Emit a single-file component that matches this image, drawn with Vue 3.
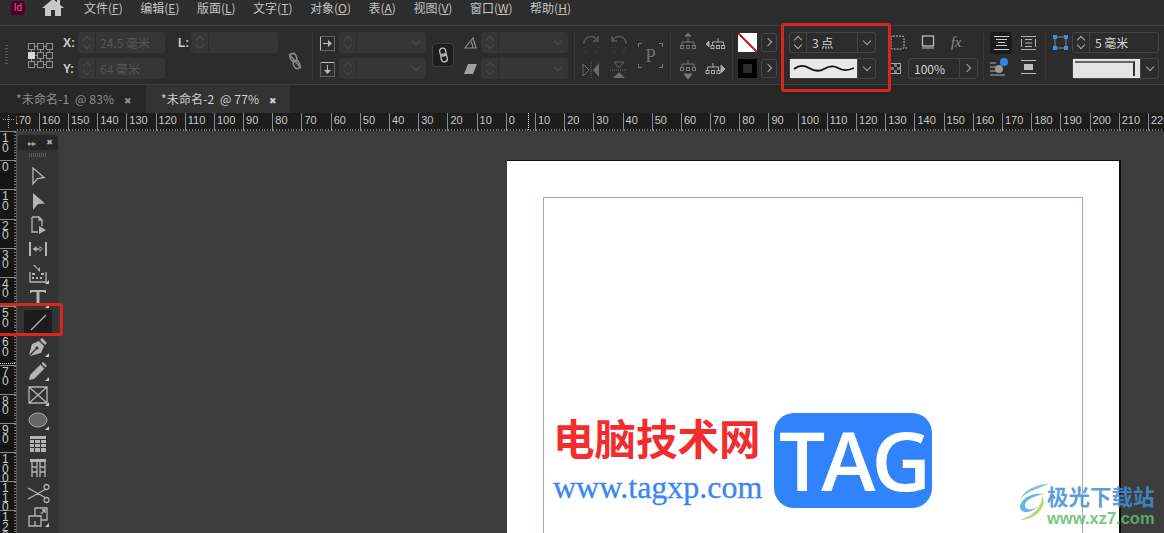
<template>
  <div class="app">
    <header class="menubar">
      <div class="id-logo">Id</div>
      <div class="home">
        <svg width="22" height="17" viewBox="0 0 22 17"><path d="M11 0 L15 3.300V1H18V5.800L22 9 H19 V17 H13 V11 H9 V17 H3 V9 H0 Z" fill="#c8c8c8" /></svg>
      </div>
      <nav class="menus">
        <span v-for="m in menus" :key="m.label">{{ m.label }}(<u>{{ m.key }}</u>)</span>
      </nav>
    </header>

    <section class="toolbar">
      <div class="grip"></div>
      <svg class="refpoint" width="26" height="26" viewBox="0 0 26 26">
        <g fill="none" stroke="#8f8f8f">
          <template v-for="r in 3" :key="r">
            <rect v-for="c in 3" :key="c" :x="0.5 + (c - 1) * 9" :y="0.5 + (r - 1) * 9" width="6" height="6" />
          </template>
        </g>
        <rect x="0" y="9" width="7" height="7" fill="#d8d8d8" />
        <path d="M7 3.5h2M16 3.5h2M7 12.5h2M16 12.5h2M7 21.5h2M16 21.5h2M3.500 7v2M3.500 16v2M12.500 7v2M12.500 16v2M21.500 7v2M21.500 16v2" stroke="#8f8f8f" />
      </svg>

      <div class="col xy">
        <div class="row"><label>X:</label><div class="field off"><span class="spin"><i class="up"></i><i class="down"></i></span><span class="val">24.5 毫米</span></div></div>
        <div class="row"><label>Y:</label><div class="field off"><span class="spin"><i class="up"></i><i class="down"></i></span><span class="val">64 毫米</span></div></div>
      </div>
      <div class="col len">
        <div class="row"><label>L:</label><div class="field off"><span class="spin"><i class="up"></i><i class="down"></i></span></div></div>
      </div>
      <svg class="unlink" width="14" height="18" viewBox="0 0 14 18" fill="none" stroke="#8c8c8c" stroke-width="1.5">
        <g transform="rotate(-25 7 9)"><rect x="4" y="1" width="6" height="8" rx="3" /><rect x="4" y="9" width="6" height="8" rx="3" /></g><path d="M1 2 L13 16" />
      </svg>
      <div class="sep"></div>

      <div class="col icon-col scale-icons">
        <svg width="15" height="15" viewBox="0 0 15 15" fill="none"><rect x=".5" y=".5" width="14" height="14" stroke="#999" stroke-dasharray="1 1" /><path d="M.5 1V14M3 7.500H9" stroke="#bbb" /><path d="M8 4L12 7.500L8 11Z" fill="#bbb" /></svg>
        <svg width="15" height="15" viewBox="0 0 15 15" fill="none"><rect x=".5" y=".5" width="14" height="14" stroke="#999" stroke-dasharray="1 1" /><path d="M1 .5H14M7.500 3V9" stroke="#bbb" /><path d="M4 8L7.500 12L11 8Z" fill="#bbb" /></svg>
      </div>
      <div class="col">
        <div class="field off"><span class="spin"><i class="up"></i><i class="down"></i></span><span class="caret"></span></div>
        <div class="field off"><span class="spin"><i class="up"></i><i class="down"></i></span><span class="caret"></span></div>
      </div>
      <button class="chain">
        <svg width="11" height="16" viewBox="0 0 11 16" fill="none" stroke="#c4c4c4" stroke-width="1.300"><g transform="rotate(-12 5.500 8)"><rect x="2.500" y="1" width="6" height="8" rx="3" /><rect x="2.500" y="7" width="6" height="8" rx="3" /></g></svg>
      </button>
      <div class="col icon-col shear">
        <svg width="13" height="12" viewBox="0 0 13 12" fill="none" stroke="#8a8a8a" stroke-width="1.200"><path d="M1 11H12L9 1Z" /><path d="M7 5Q9 7 8.500 11" /></svg>
        <svg width="13" height="12" viewBox="0 0 13 12"><path d="M4 1H13L9 11H0Z" fill="#a0a0a0" /></svg>
      </div>
      <div class="col">
        <div class="field off"><span class="spin"><i class="up"></i><i class="down"></i></span><span class="caret"></span></div>
        <div class="field off"><span class="spin"><i class="up"></i><i class="down"></i></span><span class="caret"></span></div>
      </div>
      <div class="sep s2"></div>

      <div class="transform">
        <svg width="18" height="18" viewBox="0 0 18 18" fill="none" stroke="#5a5a5a" stroke-width="1.500"><path d="M2 9A7 7 0 0 1 15 5" /><path d="M11 6H16V1" /><path d="M2 12A7 7 0 0 0 16 12" stroke-width="1" stroke-dasharray="1 2" /></svg>
        <svg width="18" height="18" viewBox="0 0 18 18" fill="none" stroke="#5a5a5a" stroke-width="1.500"><path d="M16 9A7 7 0 0 0 3 5" /><path d="M7 6H2V1" /><path d="M2 12A7 7 0 0 0 16 12" stroke-width="1" stroke-dasharray="1 2" /></svg>
        <svg width="18" height="18" viewBox="0 0 18 18"><path d="M1 3L7 9L1 15Z" fill="none" stroke="#666" /><path d="M17 2L11 9L17 16Z" fill="#6b6b6b" /><path d="M9 0V18" stroke="#666" stroke-dasharray="1 1" /></svg>
        <svg width="18" height="18" viewBox="0 0 18 18"><path d="M4 1L14 1L9 7Z" fill="none" stroke="#666" /><path d="M3 17L15 17L9 11Z" fill="#6b6b6b" /><path d="M0 9H18" stroke="#666" stroke-dasharray="1 1" /></svg>
      </div>
      <div class="pbox"><span>P</span></div>
      <div class="sep s3"></div>

      <div class="aligns">
        <svg width="18" height="22" viewBox="0 0 18 22" fill="none" stroke="#777"><path d="M9 0L12 3H6Z" fill="#777" /><path d="M9 5V9M3 12V9H15V12" /><rect x="1.500" y="12.500" width="3" height="3" /><rect x="7.500" y="12.500" width="3" height="3" /><rect x="13.500" y="12.500" width="3" height="3" /></svg>
        <svg width="20" height="16" viewBox="0 0 20 16" fill="none" stroke="#aaa"><path d="M1 8L4 5V11Z" fill="#aaa" /><path d="M13 2V6M7.500 9V6H18.500V9" /><rect x="6" y="9.500" width="3" height="3" /><rect x="11.500" y="9.500" width="3" height="3" /><rect x="16.500" y="9.500" width="3" height="3" /></svg>
        <svg width="18" height="22" viewBox="0 0 18 22" fill="none" stroke="#777"><path d="M9 2V6M3 9V6H15V9" /><rect x="1.500" y="9.500" width="3" height="3" /><rect x="7.500" y="9.500" width="3" height="3" /><rect x="13.500" y="9.500" width="3" height="3" /><path d="M9 21L5 16H13Z" fill="#777" /></svg>
        <svg width="20" height="16" viewBox="0 0 20 16" fill="none" stroke="#aaa"><path d="M8 2V6M2.500 9V6H13.500V9" /><rect x="1" y="9.500" width="3" height="3" /><rect x="6.500" y="9.500" width="3" height="3" /><rect x="12" y="9.500" width="3" height="3" /><path d="M20 8L16 4V12Z" fill="#aaa" /></svg>
      </div>
      <div class="sep s4"></div>

      <div class="swatches">
        <div class="swatch none"></div>
        <button class="more"><i></i></button>
        <div class="swatch stroke"></div>
        <button class="more"><i></i></button>
      </div>

      <div class="col stroke-col">
        <div class="field"><span class="spin on"><i class="up"></i><i class="down"></i></span><span class="val on">3 点</span><span class="caret on boxed"></span></div>
        <div class="field">
          <span class="line-preview">
            <svg width="62" height="9" viewBox="0 0 62 9" fill="none" stroke="#111" stroke-width="1.800"><path d="M1 5C6 1 11 1 16 4S26 8 31 5S40 1 45 4S54 7 61 4" /></svg>
          </span>
          <span class="caret on boxed"></span>
        </div>
      </div>

      <div class="effects">
        <div class="fx-row">
          <svg width="17" height="15" viewBox="0 0 17 15" fill="none"><path d="M3 1H12Q14 1 14 3V12Q14 14 12 14H3Q1 14 1 12V3Q1 1 3 1Z" stroke="#bbb" stroke-dasharray="2 1" /><path d="M15 13h2" stroke="#999" /></svg>
          <svg width="14" height="16" viewBox="0 0 14 16" fill="none"><rect x="1.500" y="1" width="11" height="10" stroke="#bbb" stroke-width="1.300" /><path d="M1 13H13" stroke="#777" stroke-width="2" /></svg>
          <span class="fx">fx<em>.</em></span>
        </div>
        <div class="fx-row lower">
          <svg class="checker" width="11" height="11" viewBox="0 0 11 11"><rect x=".5" y=".5" width="10" height="10" fill="#777" stroke="#aaa" /><path d="M1 1h3v3H1zM7 1h3v3H7zM4 4h3v3H4zM1 7h3v3H1zM7 7h3v3H7z" fill="#222" /></svg>
          <div class="field opacity"><span class="val on">100%</span><span class="caret on boxed arrow"></span></div>
        </div>
      </div>
      <div class="sep s5"></div>

      <div class="wraps">
        <div class="wrap active">
          <svg width="15" height="14" viewBox="0 0 15 14" fill="none" stroke="#d0d0d0"><path d="M0 .5H15M2 3.500H13M4 6.500H11M2 9.500H13M0 13.500H15" /></svg>
        </div>
        <div class="wrap">
          <svg width="15" height="14" viewBox="0 0 15 14" fill="none" stroke="#b0b0b0"><path d="M0 .5H15M0 13.500H15M.5 3V11M14.500 3V11M4 3.500H11M4 7H11M4 10.500H11" /></svg>
        </div>
        <div class="wrap">
          <svg width="22" height="20" viewBox="0 0 22 20" fill="none"><path d="M0 6H6M0 10H6M0 14H6M0 18H15" stroke="#b0b0b0" /><circle cx="9" cy="12" r="4" fill="#999" /><circle cx="14" cy="5" r="4" fill="#2f86e8" /></svg>
        </div>
        <div class="wrap">
          <svg width="15" height="14" viewBox="0 0 15 14" fill="none"><path d="M0 .5H15M0 13.500H15" stroke="#c0c0c0" /><rect x="3" y="4" width="9" height="6" fill="#c0c0c0" /></svg>
        </div>
      </div>
      <div class="sep s6"></div>

      <div class="col corner-col">
        <div class="row">
          <svg class="corner" width="15" height="15" viewBox="0 0 15 15"><path d="M2 2H13V13H2Z" fill="none" stroke="#888" /><path d="M0 0h4v4H0zM11 0h4v4h-4zM0 11h4v4H0zM11 11h4v4h-4z" fill="#3d8ee0" /></svg>
          <div class="field"><span class="spin on"><i class="up"></i><i class="down"></i></span><span class="val on">5 毫米</span></div>
        </div>
        <div class="row">
          <div class="field"><span class="frame-preview"><b></b></span><span class="caret on boxed"></span></div>
        </div>
      </div>
    </section>

    <div class="tabs">
      <div class="tab">*未命名-1&nbsp; @ 83% <b>✖</b></div>
      <div class="tab active">*未命名-2&nbsp; @ 77% <b>✖</b></div>
    </div>

    <div class="h-ruler">
      <div class="corner-box"></div>
      <div class="h-track">
        <div v-for="(n, i) in hLabels" :key="i" class="h-cell"><span>{{ n }}</span></div>
      </div>
      <i class="cursor-x"></i>
    </div>

    <main class="work">
      <aside class="v-ruler">
        <div v-for="(n, i) in vLabels" :key="i" class="v-cell">
          <span v-for="(d, j) in String(n)" :key="j">{{ d }}</span>
        </div>
        <i class="cursor-y"></i>
      </aside>

      <div class="canvas">
        <div class="page">
          <div class="margins">
            <div class="brand">
              <div class="brand-text">
                <div class="brand-cn">电脑技术网</div>
                <div class="brand-url">www.tagxp.com</div>
              </div>
              <div class="brand-tag">TAG</div>
            </div>
          </div>
        </div>

        <div class="toolbox">
          <div class="tb-head"><span>▸▸</span><b>✖</b></div>
          <div class="tb-grip"></div>
          <div v-for="t in tools" :key="t.name" class="tool" :class="{ sel: t.name === 'line', corner: t.corner }">
            <svg width="24" height="24" viewBox="0 0 24 24">
              <path v-if="t.fill" :d="t.fill" fill="#b4b4b4" />
              <path v-if="t.gray" :d="t.gray" fill="#666" stroke="#aaa" />
              <path v-if="t.line" :d="t.line" fill="none" stroke="#b4b4b4" stroke-width="1.300" />
            </svg>
          </div>
        </div>
      </div>
    </main>

    <div class="mark stroke-mark"></div>
    <div class="mark tool-mark"></div>

    <div class="xz7">
      <svg width="32" height="42" viewBox="0 0 32 42" fill="none">
        <path d="M31 2C18 2 6 8 2 18C6 11 18 7 31 2Z" fill="#67b7e8" />
        <path d="M26 12C14 10 2 17 2 25C2 32 14 32 20 24C16 28 8 29 7 24C6 19 15 14 26 12Z" fill="#4fa8dc" />
        <path d="M24 14C30 24 18 38 2 38C14 34 24 26 24 14Z" fill="#a9d65c" />
      </svg>
      <div class="xz7-text">
        <div class="xz7-cn">极光下载站</div>
        <div class="xz7-url">www.xz7.com</div>
      </div>
    </div>
  </div>
</template>

<script setup>
const menus = [
  { label: '文件', key: 'F' },
  { label: '编辑', key: 'E' },
  { label: '版面', key: 'L' },
  { label: '文字', key: 'T' },
  { label: '对象', key: 'O' },
  { label: '表', key: 'A' },
  { label: '视图', key: 'V' },
  { label: '窗口', key: 'W' },
  { label: '帮助', key: 'H' }
]

const hLabels = []
for (let n = 170; n >= 10; n -= 10) hLabels.push(n)
for (let n = 0; n <= 220; n += 10) hLabels.push(n)

const vLabels = [10, 0, 10, 20, 30, 40, 50, 60, 70, 80, 90, 100, 110, 120]

const tools = [
  { name: 'select', line: 'M7 4L18 13.500L11.500 14.500L7 20Z' },
  { name: 'direct', fill: 'M7 4L19 14.500L12 15L7 21Z' },
  { name: 'page', line: 'M6 4H13L16 7V13M6 4V19H12M13 4V7H16', fill: 'M13 13L20 17L13 21Z' },
  { name: 'gap', fill: 'M3 5H5V19H3ZM19 5H21V19H19ZM7 11.300H17V12.700H7ZM7 12L10.500 9V15ZM17 12L13.500 9V15Z' },
  { name: 'collect', corner: true, line: 'M4 10V20H20V10', fill: 'M6 15h2v2H6zM10 15h2v2h-2zM14 15h2v2h-2zM6 11h3v2H6zM15 11h3v2h-3zM7 3L14 10L14 5L12 7L9 3Z' },
  { name: 'type', corner: true, fill: 'M4 4H20V7H19L18 6H13.500V18H15V20H9V18H10.500V6H6L5 7H4Z' },
  { name: 'line', line: 'M5 20L20 5' },
  { name: 'pen', corner: true, fill: 'M16 3L21 8L19 10L14 5ZM13 6L18 11L15 18L4 21L10.500 14.500A1.500 1.500 0 1 0 9.500 13.500L3 20L6 9Z' },
  { name: 'pencil', corner: true, fill: 'M17 3L21 7L19.500 8.500L15.500 4.500ZM14.500 5.500L18.500 9.500L8 20L3 21L4 16Z' },
  { name: 'frame', corner: true, line: 'M3 4H21V20H3ZM3 4L21 20M21 4L3 20' },
  { name: 'ellipse', corner: true, gray: 'M3 12A9 7 0 1 0 21 12A9 7 0 1 0 3 12Z' },
  { name: 'table', fill: 'M4 4H20V7H4ZM4 8H8V11H4ZM9 8H14V11H9ZM15 8H20V11H15ZM4 12H8V15H4ZM9 12H14V15H9ZM15 12H20V15H15ZM4 16H8V20H4ZM9 16H14V20H9ZM15 16H20V20H15Z' },
  { name: 'tablev', fill: 'M4 3H20V6H4Z', line: 'M6 6V21M11 6V21M14 6V21M19 6V21M6 11H11M6 16H11M14 11H19M14 16H19' },
  { name: 'scissors', line: 'M2 7L20 17M2 18L20 8M18 6A2.500 2.500 0 1 0 23 6A2.500 2.500 0 1 0 18 6ZM18 19A2.500 2.500 0 1 0 23 19A2.500 2.500 0 1 0 18 19Z' },
  { name: 'free', corner: true, line: 'M9 11V3H21V15H15M3 11H15V21H3ZM9 16V21M15 9L19 5M16 5H19V8' }
]
</script>

<style>
html, body { margin: 0; background: #3b3b3b; overflow: hidden; }
</style>

<style scoped>
.app {
  position: relative;
  width: 1164px;
  height: 533px;
  overflow: hidden;
  display: flex;
  flex-direction: column;
  font-family: "Noto Sans CJK SC", "Noto Sans", sans-serif;
  color: #c8c8c8;
  background: #3b3b3b;
}

/* menu */
.menubar {
  height: 25px;
  flex: none;
  display: flex;
  align-items: center;
  background: #2d2d2d;
}
.id-logo {
  width: 14px;
  height: 14px;
  margin: -9px 0 0 11px;
  border-radius: 3px;
  background: #4b0420;
  color: #f0529a;
  font: 10px/14px "Liberation Sans", sans-serif;
  text-align: center;
}
.home {
  width: 24px;
  height: 25px;
  margin-left: 16px;
  display: flex;
  justify-content: center;
  margin-top: -2px;
  overflow: hidden;
  align-items: flex-start;
}
.menus {
  display: flex;
  gap: 17.500px;
  margin-left: 19px;
  margin-top: -9px;
  font-size: 12px;
  line-height: 16px;
  color: #c4c4c4;
}

/* control panel */
.toolbar {
  height: 60px;
  flex: none;
  box-sizing: border-box;
  display: flex;
  align-items: flex-start;
  padding-top: 6px;
  border-top: 1px solid #3e3e3e;
  border-bottom: 1px solid #3e3e3e;
  background: #2c2c2c;
}
.toolbar > * { flex: none; }
.grip {
  width: 3px;
  height: 20px;
  margin: 13px 0 0 5px;
  background: repeating-linear-gradient(#5a5a5a 0 1px, transparent 1px 3px);
}
.refpoint { margin: 11px 0 0 20px; }
.col {
  display: flex;
  flex-direction: column;
  gap: 5px;
}
.row {
  display: flex;
  align-items: center;
}
.row label {
  width: 15px;
  font: bold 12px "Liberation Sans", sans-serif;
  color: #c8c8c8;
}
.xy { margin-left: 9px; }
.len { margin-left: 13px; }
.len label { width: 13px; }
.field {
  position: relative;
  display: flex;
  align-items: center;
  box-sizing: border-box;
  width: 87px;
  height: 21px;
  border: 1px solid #434343;
  border-radius: 3px;
  font-size: 12px;
}
.field.off { background: #363636; border-color: #363636; }
.spin {
  position: relative;
  flex: none;
  box-sizing: border-box;
  width: 17px;
  height: 100%;
  border-right: 1px solid #2c2c2c;
}
.spin.on { border-right-color: #434343; }
.spin i, .caret::after, .more i {
  position: absolute;
  box-sizing: border-box;
  width: 6px;
  height: 6px;
  border-right: 1px solid #4c4c4c;
  border-bottom: 1px solid #4c4c4c;
}
.spin i { left: 5px; }
.spin .up { top: 4px; transform: rotate(225deg); }
.spin .down { bottom: 4px; transform: rotate(45deg); }
.spin.on i { border-color: #aaa; }
.val {
  margin-left: 4px;
  color: #555;
  white-space: nowrap;
  line-height: 19px;
}
.val.on { margin-left: 5px; color: #d4d4d4; }
.caret {
  position: absolute;
  right: 0;
  top: 0;
  box-sizing: border-box;
  width: 18px;
  height: 100%;
}
.caret::after {
  content: "";
  left: 6px;
  top: 5px;
  transform: rotate(45deg);
}
.caret.on::after { border-color: #a8a8a8; }
.caret.boxed { border-left: 1px solid #434343; }
.caret.arrow::after { transform: rotate(-45deg); top: 6px; left: 4px; }
.unlink { margin: 20px 0 0 10px; }
.sep {
  width: 1px;
  height: 47px;
  margin: 1px 0 0 10px;
  background: #3a3a3a;
}
.icon-col { gap: 11px; }
.scale-icons { margin: 4px 4px 0 7px; }
.chain {
  width: 22px;
  height: 24px;
  margin: 11px 0 0 6px;
  padding: 0;
  border: 1px solid #414141;
  border-radius: 4px;
  background: #1d1d1d;
  display: flex;
  align-items: center;
  justify-content: center;
}
.shear { margin: 5px 4px 0 10px; gap: 14px; }
.s2 { margin-left: 6px; }
.transform {
  display: grid;
  grid-template-columns: 18px 18px;
  gap: 8px 10px;
  margin: 3px 0 0 7px;
}
.pbox {
  width: 25px;
  height: 25px;
  margin: 11px 0 0 10px;
  background:
    linear-gradient(#777, #777) 0 0 / 4px 1px no-repeat,
    linear-gradient(#777, #777) 0 0 / 1px 4px no-repeat,
    linear-gradient(#777, #777) 100% 0 / 4px 1px no-repeat,
    linear-gradient(#777, #777) 100% 0 / 1px 4px no-repeat,
    linear-gradient(#777, #777) 0 100% / 4px 1px no-repeat,
    linear-gradient(#777, #777) 0 100% / 1px 4px no-repeat,
    linear-gradient(#777, #777) 100% 100% / 4px 1px no-repeat,
    linear-gradient(#777, #777) 100% 100% / 1px 4px no-repeat;
  display: flex;
  align-items: center;
  justify-content: center;
  font: 19px "Liberation Serif", serif;
  color: #6f6f6f;
}
.s3 { margin-left: 7px; }
.aligns {
  display: grid;
  grid-template-columns: 18px 20px;
  column-gap: 8px;
  row-gap: 3px;
  align-items: center;
  margin: 1px 0 0 8px;
}
.s4 { margin-left: 7px; }
.swatches {
  display: grid;
  grid-template-columns: 19px 16px;
  column-gap: 4px;
  row-gap: 7px;
  margin: 1px 0 0 5px;
}
.swatch { height: 19px; }
.swatch.none {
  background: linear-gradient(to top right, #fff 0 46%, #c8282e 46% 54%, #fff 54%);
}
.swatch.stroke {
  box-sizing: border-box;
  border: 5px solid #000;
  background: #2c2c2c;
}
.more {
  position: relative;
  padding: 0;
  background: none;
  border: 1px solid #444;
  border-radius: 3px;
}
.more i {
  left: 3px;
  top: 5px;
  border-color: #aaa;
  transform: rotate(-45deg);
}
.stroke-col { margin-left: 12px; }
.line-preview {
  width: 67px;
  height: 100%;
  background: #e8e8e8;
  display: flex;
  align-items: center;
  justify-content: center;
}
.effects {
  width: 90px;
  margin-left: 14px;
}
.fx-row {
  display: flex;
  align-items: center;
  gap: 14px;
  height: 21px;
}
.fx-row.lower { margin-top: 5px; gap: 7px; }
.fx {
  font: italic 14px "Liberation Serif", serif;
  color: #8f8f8f;
  margin-left: 2px;
}
.fx em { font-size: 9px; }
.opacity { width: 70px; }
.wraps {
  display: grid;
  grid-template-columns: 22px 22px;
  column-gap: 5px;
  row-gap: 2px;
  margin: 0 0 0 6px;
}
.wrap {
  height: 22px;
  display: flex;
  align-items: center;
  justify-content: center;
  border-radius: 3px;
}
.wrap.active { background: #1b1b1b; }
.s5 { margin-left: 3px; }
.s6 { margin-left: 6px; }
.corner-col { margin-left: 7px; }
.corner-col .corner { margin-right: 4px; }
.corner-col .row:last-child { padding-left: 19px; }
.frame-preview {
  position: relative;
  width: 67px;
  height: 100%;
  background: #e4e4e4;
}
.frame-preview b {
  position: absolute;
  inset: 2px 5px 2px 2px;
  border-top: 2px solid #666;
  border-right: 2px solid #333;
}

/* tabs */
.tabs {
  height: 28px;
  flex: none;
  display: flex;
  background: #272727;
  font-size: 12px;
  line-height: 28px;
  color: #8e8e8e;
}
.tab {
  width: 146px;
  box-sizing: border-box;
  padding-left: 16px;
  white-space: nowrap;
  letter-spacing: 0.150px;
}
.tab b {
  font: 9px "DejaVu Sans", sans-serif;
  margin-left: 7px;
}
.tab.active { width: 144px; padding-left: 15px; background: #333; color: #d0d0d0; }

/* rulers */
.h-ruler {
  position: relative;
  height: 18px;
  flex: none;
  display: flex;
  background: #1d1d1d;
}
.corner-box {
  position: relative;
  width: 16px;
  flex: none;
  background:
    repeating-linear-gradient(to right, #999 0 1px, transparent 1px 2px) 3px 6px / 12px 1px no-repeat,
    repeating-linear-gradient(#999 0 1px, transparent 1px 2px) 8px 2px / 1px 14px no-repeat;
}
.h-track {
  flex: 1;
  display: flex;
  overflow: hidden;
  font: 11px/14px "Liberation Sans", sans-serif;
  color: #c8c8c8;
}
.h-cell {
  flex: none;
  width: 29.200px;
  height: 18px;
  box-sizing: border-box;
  padding-left: 2px;
  border-left: 1px solid #8a8a8a;
  background: repeating-linear-gradient(to right, #777 0 1px, transparent 1px 2.920px) 0 100% / 100% 2px no-repeat;
}
.h-cell:first-child { margin-left: -6.400px; }
.cursor-x {
  position: absolute;
  left: 528px;
  top: 0;
  height: 18px;
  width: 1px;
  background: repeating-linear-gradient(#eee 0 1px, transparent 1px 2px);
}
.work {
  flex: 1;
  display: flex;
  min-height: 0;
}
.v-ruler {
  position: relative;
  width: 16px;
  flex: none;
  background: #161616;
  border-right: 1px solid #555;
  box-sizing: content-box;
  overflow: hidden;
}
.cursor-y {
  position: absolute;
  left: 0;
  top: 232px;
  width: 16px;
  height: 1px;
  background: repeating-linear-gradient(to right, #eee 0 1px, transparent 1px 2px);
}
.v-cell {
  height: 29.200px;
  box-sizing: border-box;
  display: flex;
  flex-direction: column;
  padding: 2px 0 0 2px;
  border-top: 1px solid #8a8a8a;
  font: 12px/9.500px "Liberation Sans", sans-serif;
  color: #c8c8c8;
  background: repeating-linear-gradient(#777 0 1px, transparent 1px 2.920px) 100% 0 / 2px 100% no-repeat;
}
.canvas {
  position: relative;
  flex: 1;
  min-width: 0;
  padding: 30px 0 0 490px;
  background: #3c3c3c;
}
.page {
  width: 614px;
  height: 400px;
  box-sizing: border-box;
  padding: 36px 36px 0;
  background: #fff;
  border-right: 2px solid #0c0c0c;
  box-shadow: 0 -1px 0 #111;
}
.margins {
  height: 400px;
  box-sizing: border-box;
  width: 540px;
  padding: 215px 0 0 11px;
  border: 1px solid #a4a4cc;
}
.brand {
  display: flex;
  gap: 12px;
}
.brand-text { width: 207px; padding-top: 2px; }
.brand-cn {
  font: bold 41.500px/44px "Noto Sans CJK SC", sans-serif;
  color: #f22d30;
  white-space: nowrap;
  margin-left: -2px;
}
.brand-url {
  font: 32px/32px "Liberation Serif", serif;
  color: #3a86f2;
  -webkit-text-stroke: 0.3px #3a86f2;
  white-space: nowrap;
  margin: 12px 0 0 -2px;
}
.brand-tag {
  width: 158px;
  height: 95px;
  border-radius: 20px;
  background: #3083fb;
  color: #fff;
  font: 600 82px/93px "Open Sans", sans-serif;
  text-align: center;
  letter-spacing: -4px;
}

/* floating tools panel */
.toolbox {
  position: absolute;
  left: 1px;
  top: 4px;
  width: 40px;
  bottom: -4px;
  background: #333;
  border-radius: 4px 4px 0 0;
  display: flex;
  flex-direction: column;
  align-items: center;
  box-shadow: 0 0 1px #222;
}
.tb-head {
  align-self: stretch;
  height: 15px;
  padding: 0 5px 0 10px;
  display: flex;
  align-items: center;
  justify-content: space-between;
  background: #262626;
  border-radius: 4px 4px 0 0;
  font-size: 8px;
  color: #aaa;
}
.tb-head b { font: 8px "DejaVu Sans", sans-serif; }
.tb-grip {
  flex: none;
  width: 18px;
  height: 4px;
  margin: 3px 0 7px;
  background: repeating-linear-gradient(to right, #5a5a5a 0 1px, transparent 1px 2px);
}
.tool {
  position: relative;
  flex: none;
  width: 28px;
  height: 24.360px;
  display: flex;
  align-items: center;
  justify-content: center;
}
.tool.sel { background: #1c1c1c; border-radius: 2px; }
.tool.corner::after {
  content: "";
  position: absolute;
  right: 3px;
  bottom: 2px;
  border: 2px solid transparent;
  border-right-color: #ccc;
  border-bottom-color: #ccc;
}

/* annotations drawn over the app */
.mark {
  position: absolute;
  box-sizing: border-box;
  border: 3px solid #d6261d;
  border-radius: 3px;
}
.stroke-mark { left: 781px; top: 23px; width: 110px; height: 69px; }
.tool-mark { left: -3px; top: 303px; width: 66px; height: 33px; }

.xz7 {
  position: absolute;
  left: 1018px;
  top: 482px;
  display: flex;
  opacity: 0.85;
}
.xz7-text { margin-left: -3px; }
.xz7-cn {
  font: bold 21.500px/27px "Noto Sans CJK SC", sans-serif;
  color: #3f8fd8;
  white-space: nowrap;
}
.xz7-url {
  font: bold 16.500px/18px "Liberation Sans", sans-serif;
  color: #63bd6a;
  white-space: nowrap;
}
</style>
